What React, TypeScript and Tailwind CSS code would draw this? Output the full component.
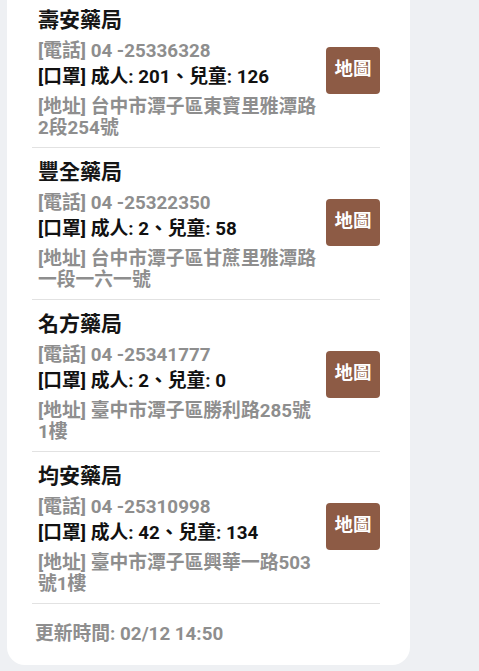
import React from "react";

type Store = {
  name: string;
  phone: string;
  adult: number;
  child: number;
  address: string;
};

const stores: Store[] = [
  { name: "壽安藥局", phone: "04 -25336328", adult: 201, child: 126, address: "台中市潭子區東寶里雅潭路2段254號" },
  { name: "豐全藥局", phone: "04 -25322350", adult: 2, child: 58, address: "台中市潭子區甘蔗里雅潭路一段一六一號" },
  { name: "名方藥局", phone: "04 -25341777", adult: 2, child: 0, address: "臺中市潭子區勝利路285號1樓" },
  { name: "均安藥局", phone: "04 -25310998", adult: 42, child: 134, address: "臺中市潭子區興華一路503號1樓" },
];

const font = { fontFamily: '"Roboto", "Noto Sans CJK TC", sans-serif' };

export default function App() {
  return (
    <div className="min-h-[671px] w-[479px] overflow-hidden bg-[#eef0f3]" style={font}>
      <div className="-mt-1 ml-[7px] w-[403px] rounded-b-[18px] bg-white pl-[25px] pr-[30px] pb-[19px]">
        {stores.map((s) => (
          <div key={s.name} className="flex items-center border-b border-[#e2e2e2] pt-[11px] pb-[8px] pl-[6px]">
            <div className="min-w-0 flex-1 pr-2">
              <div className="text-[21px] leading-[27px] font-bold text-[#151515]">{s.name}</div>
              <div className="mt-[6px] text-[18.8px] leading-[23px] font-bold text-[#8e8e8e]">
                [電話] {s.phone}
              </div>
              <div className="mt-[3px] text-[18.8px] leading-[23px] font-bold text-[#111]">
                [口罩] 成人: {s.adult}、兒童: {s.child}
              </div>
              <div className="mt-[8px] w-[280px] text-[18.8px] leading-[21px] font-bold text-[#8e8e8e]">
                [地址] {s.address}
              </div>
            </div>
            <button className="mb-[6px] flex h-[47px] w-[54px] shrink-0 items-center justify-center rounded-[4px] bg-[#8d5b45] text-[18.5px] font-bold text-white">
              地圖
            </button>
          </div>
        ))}
        <div className="pt-[19px] pl-[3px] text-[18.8px] leading-[23px] font-bold text-[#8e8e8e]">
          更新時間: 02/12 14:50
        </div>
      </div>
    </div>
  );
}
